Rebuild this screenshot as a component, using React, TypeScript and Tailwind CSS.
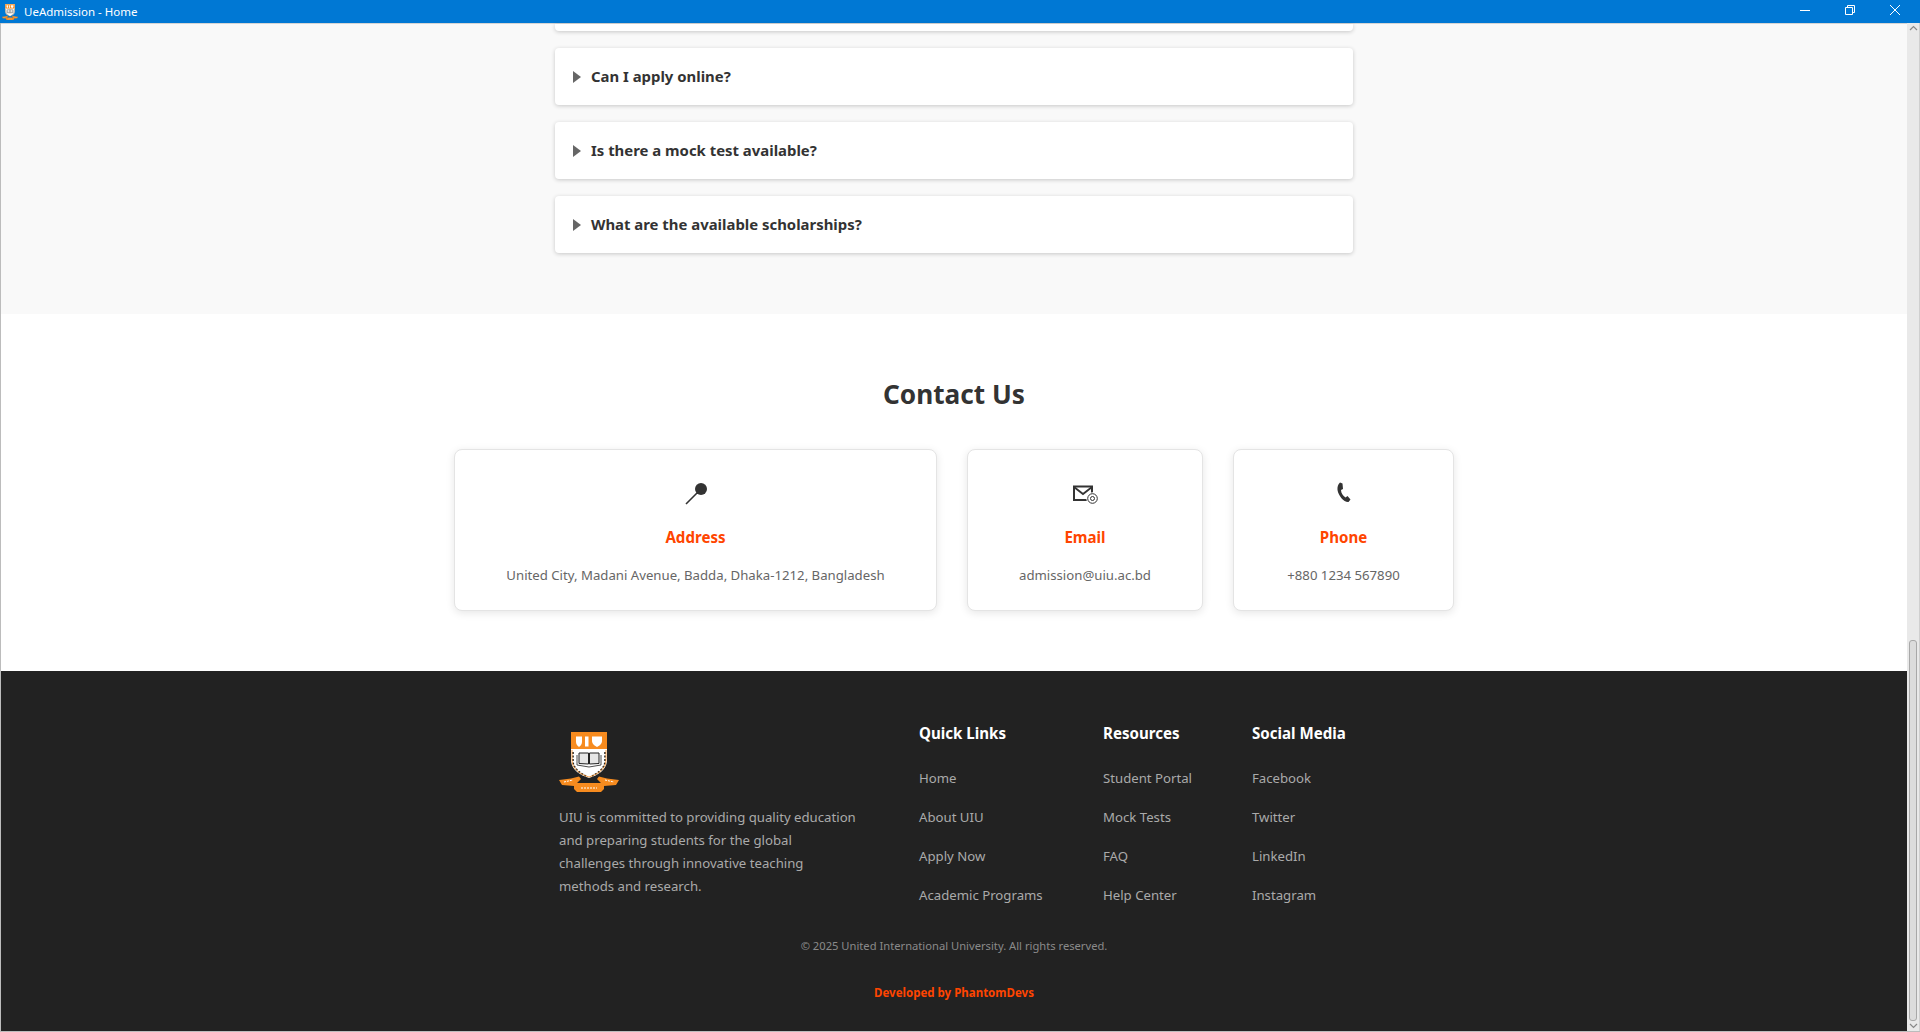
const font = { fontFamily: '"Noto Sans", "Open Sans", sans-serif' }

function UiuLogo({ size }: { size: number }) {
  return (
    <svg width={size} height={size} viewBox="0 0 60 60" className="block shrink-0">
      {/* shield */}
      <path d="M12 0H48V28C48 37 40 43 30 46C20 43 12 37 12 28Z" fill="#fff" />
      <path d="M12 0H48V17H46.5V2H13.5V17H12Z" fill="#f68b1f" />
      <rect x="13" y="2" width="34" height="15" fill="#f68b1f" />
      <path d="M17 4.5H23V10C23 12 21.5 14 20 15C18.5 14 17 12 17 10Z" fill="#fff" />
      <rect x="26" y="4.5" width="3.5" height="10" fill="#fff" />
      <path d="M33 4.5H43V9C43 12 40 14 38 15C36 14 33 12 33 9Z" fill="#fff" />
      {/* book */}
      <path d="M20 21H29.5V32L20 31.5Z M30.5 21H40V31.5L30.5 32Z" fill="#e6e6e6" stroke="#222" strokeWidth="1" />
      <path d="M18 23V33L30 35L42 33V23" fill="none" stroke="#222" strokeWidth="0.8" />
      <path d="M14 20V30C15 37 21 41 27 44M46 20V30C45 37 39 41 33 44" fill="none" stroke="#222" strokeWidth="1.6" strokeDasharray="2 1.5" />
      <path d="M13 18V28C13 36 20 42 30 45C40 42 47 36 47 28V18" fill="none" stroke="#f68b1f" strokeWidth="0.8" />
      {/* ribbon */}
      <path d="M0 48L12 46.5L20 44.5L22 47L15 54L3 53Z" fill="#f68b1f" />
      <path d="M60 48L48 46.5L40 44.5L38 47L45 54L57 53Z" fill="#f68b1f" />
      <path d="M15 51H45V57L42 60H18L15 57Z" fill="#f68b1f" />
      <path d="M22 56H38" stroke="#fff" strokeWidth="1" strokeDasharray="2 1" />
      <path d="M5 50L14 48M46 48L55 50" stroke="#fff" strokeWidth="1" strokeDasharray="2 1" />
    </svg>
  )
}

function WindowButtons() {
  return (
    <div className="flex items-center pr-[19px] gap-[33px] -mt-[3px]">
      <svg width="12" height="12" viewBox="0 0 12 12">
        <path d="M1 6.5H11" stroke="#fff" strokeWidth="1" />
      </svg>
      <svg width="12" height="12" viewBox="0 0 12 12">
        <path d="M1.5 3.5H8.5V10.5H1.5Z M3.5 3.5V1.5H10.5V8.5H8.5" fill="none" stroke="#fff" strokeWidth="1" />
      </svg>
      <svg width="12" height="12" viewBox="0 0 12 12">
        <path d="M1 1L11 11M11 1L1 11" stroke="#fff" strokeWidth="1" />
      </svg>
    </div>
  )
}

function FaqRow({ q }: { q: string }) {
  return (
    <div className="h-[57px] bg-white rounded-[4px] shadow-[0_1px_4px_rgba(0,0,0,0.2)] flex items-center pl-[18px]">
      <span className="w-0 h-0 border-y-[6px] border-y-transparent border-l-[8px] border-l-[#666] mr-[10px]"></span>
      <span className="text-[14.9px] font-bold text-[#333]">{q}</span>
    </div>
  )
}

function ContactCard({ w, title, value, icon }: { w: string; title: string; value: string; icon: React.ReactNode }) {
  return (
    <div className={`${w} h-[162px] pl-[1px] bg-white rounded-[8px] border border-[#e4e4e4] shadow-[0_2px_8px_rgba(0,0,0,0.1)] flex flex-col items-center`}>
      <div className="h-[26px] mt-[30px] flex items-center justify-center">{icon}</div>
      <div className="mt-[20px] text-[15.1px] leading-[22px] font-bold text-[#ff4500]">{title}</div>
      <div className="mt-[16px] text-[13.2px] leading-[22px] text-[#666]">{value}</div>
    </div>
  )
}

function LinkCol({ w, title, links }: { w: string; title: string; links: string[] }) {
  return (
    <div className={w}>
      <div className="text-[15.1px] leading-[22px] font-bold text-white mb-[23px]">{title}</div>
      <div className="flex flex-col gap-[17px]">
        {links.map((l) => (
          <div key={l} className="text-[13.2px] leading-[22px] text-[#aaaaaa]">{l}</div>
        ))}
      </div>
    </div>
  )
}

export default function App() {
  return (
    <div className="w-[1920px] h-[1032px] overflow-hidden flex flex-col bg-white" style={font}>
      {/* title bar */}
      <div className="h-[23px] bg-[#0078d4] flex items-center justify-between shrink-0">
        <div className="flex items-center pl-[2px] gap-[6px]">
          <UiuLogo size={16} />
          <span className="text-[11.5px] leading-[23px] text-white">UeAdmission - Home</span>
        </div>
        <WindowButtons />
      </div>

      <div className="flex-1 flex min-h-0 border-l border-b border-[#bcbcbc]">
        <div className="flex-1 min-w-0">
          {/* faq */}
          <section className="h-[291px] bg-[#f9f9f9] border-t border-[#d5d5d5]">
            <div className="w-[798px] ml-[554px] flex flex-col gap-[17px]">
              <div className="h-[7px] bg-white rounded-b-[4px] shadow-[0_1px_4px_rgba(0,0,0,0.2)]"></div>
              <FaqRow q="Can I apply online?" />
              <FaqRow q="Is there a mock test available?" />
              <FaqRow q="What are the available scholarships?" />
            </div>
          </section>

          {/* contact */}
          <section className="h-[357px] bg-white flex flex-col items-center pt-[59px]">
            <h2 className="text-[26.2px] leading-[42px] font-bold text-[#333]">Contact Us</h2>
            <div className="flex gap-[30px] mt-[34px] -ml-[1px]">
              <ContactCard
                w="w-[483px]"
                title="Address"
                value="United City, Madani Avenue, Badda, Dhaka-1212, Bangladesh"
                icon={
                  <svg width="24" height="24" viewBox="0 0 24 24" className="ml-[2px] -mt-[1px]">
                    <circle cx="16" cy="8" r="6" fill="#333" />
                    <path d="M1 23L13 11" stroke="#333" strokeWidth="1.6" />
                  </svg>
                }
              />
              <ContactCard
                w="w-[236px]"
                title="Email"
                value="admission@uiu.ac.bd"
                icon={
                  <svg width="26" height="20" viewBox="0 0 26 20" className="mt-[3px] ml-[1px]">
                    <path d="M1 1.5H19V15H1Z" fill="none" stroke="#333" strokeWidth="2" />
                    <path d="M1 2L10 9L19 2" fill="none" stroke="#333" strokeWidth="1.8" />
                    <circle cx="19.5" cy="13.5" r="6.2" fill="#fff" />
                    <circle cx="19.5" cy="13.5" r="4.8" fill="none" stroke="#333" strokeWidth="1" />
                    <circle cx="19.5" cy="13.5" r="2" fill="none" stroke="#333" strokeWidth="1" />
                  </svg>
                }
              />
              <ContactCard
                w="w-[221px]"
                title="Phone"
                value="+880 1234 567890"
                icon={
                  <svg width="14" height="21" viewBox="0 0 14 21" className="-mt-[1px]">
                    <path d="M3 0.5L5.5 1.5L6 7L4 8C4 11 6 14 8.5 15.5L10.5 14L13.5 17.5L11.5 20C7 20.5 1.5 14 0.5 8C0.2 5 1 2 3 0.5Z" fill="#333" />
                  </svg>
                }
              />
            </div>
          </section>

          {/* footer */}
          <footer className="h-[360px] bg-[#222222] pt-[51px]">
            <div className="flex ml-[558px]">
              <div className="w-[360px] pt-[10px]">
                <UiuLogo size={60} />
                <p className="w-[299px] mt-[14px] text-[13.2px] leading-[23px] text-[#aaaaaa]">
                  UIU is committed to providing quality education and preparing students for the global challenges through innovative teaching methods and research.
                </p>
              </div>
              <LinkCol w="w-[184px]" title="Quick Links" links={["Home", "About UIU", "Apply Now", "Academic Programs"]} />
              <LinkCol w="w-[149px]" title="Resources" links={["Student Portal", "Mock Tests", "FAQ", "Help Center"]} />
              <LinkCol w="w-[120px]" title="Social Media" links={["Facebook", "Twitter", "LinkedIn", "Instagram"]} />
            </div>
            <div className="mt-[31px] text-center text-[11.2px] leading-[18px] text-[#8a8a8a]">
              © 2025 United International University. All rights reserved.
            </div>
            <div className="mt-[29px] text-center text-[11.5px] leading-[18px] font-bold text-[#ff4500]">
              Developed by PhantomDevs
            </div>
          </footer>
        </div>

        {/* scrollbar */}
        <div className="w-[13px] bg-[#e9e9e9] border-r border-[#cfcfcf] flex flex-col items-center justify-between shrink-0">
          <svg width="9" height="8" viewBox="0 0 9 8" className="mt-[1px]">
            <path d="M1 6L4.5 2.5L8 6" fill="none" stroke="#888" strokeWidth="1.2" />
          </svg>
          <div className="flex-1 w-full flex flex-col justify-end px-[2px]">
            <div className="h-[381px] rounded-[3px] bg-[#dcdcdc] border border-[#a8a8a8]"></div>
          </div>
          <svg width="9" height="10" viewBox="0 0 9 10">
            <path d="M1 3L4.5 6.5L8 3" fill="none" stroke="#888" strokeWidth="1.2" />
          </svg>
        </div>
      </div>
    </div>
  )
}
